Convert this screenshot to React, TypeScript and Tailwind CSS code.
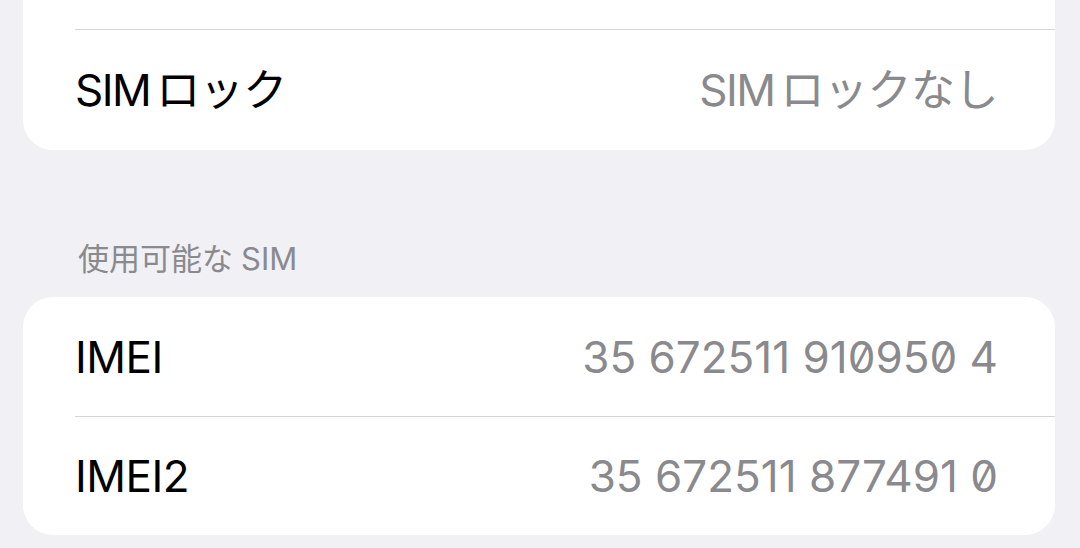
import React from "react";

type Row = { label: string; latin?: string; value: string; valueLatin?: string; mono?: boolean; h: string };

const font = "font-['Inter','Noto_Sans_CJK_JP',sans-serif]";

// iOS puts a little air between latin and kana, so split them
const Mixed = ({ latin, rest }: { latin?: string; rest: string }) => (
  <>
    {latin && <span className="mr-[6px] tracking-[-1.5px]">{latin}</span>}
    {rest}
  </>
);

const SettingRow = ({ row, divider }: { row: Row; divider?: boolean }) => (
  <div className="pl-[52px]">
    <div
      className={`flex items-center justify-between pr-[57px] ${row.h} ${
        divider ? "border-b border-[#d6d6da]" : ""
      }`}
    >
      <span className="text-[44px] text-black tracking-[-0.5px]">
        <Mixed latin={row.latin} rest={row.label} />
      </span>
      <span
        className={`text-[44px] text-[#8a8a8e] ${
          row.mono ? "slashed-zero tracking-[0px]" : "tracking-[-0.5px]"
        }`}
      >
        <Mixed latin={row.valueLatin} rest={row.value} />
      </span>
    </div>
  </div>
);

const App = () => {
  // first group is scrolled mostly off screen, only its last row shows
  const lockRows: Row[] = [
    { label: "", value: "", h: "h-[120px]" },
    { latin: "SIM", label: "ロック", valueLatin: "SIM", value: "ロックなし", h: "h-[120px]" },
  ];
  const simRows: Row[] = [
    { label: "IMEI", value: "35 672511 910950 4", mono: true, h: "h-[120px]" },
    { label: "IMEI2", value: "35 672511 877491 0", mono: true, h: "h-[118px]" },
  ];

  return (
    <div className={`w-[1080px] h-[548px] overflow-hidden bg-[#f0f0f5] pl-[23px] pr-[25px] ${font}`}>
      <div className="bg-white rounded-[30px] -mt-[90px] overflow-hidden">
        {lockRows.map((r, i) => (
          <SettingRow key={i} row={r} divider={i < lockRows.length - 1} />
        ))}
      </div>

      <div className="h-[147px] flex items-end pb-[20px] pl-[55px]">
        <span className="text-[31px] leading-[36px] text-[#8a8a8e]">
          使用可能な<span className="ml-[8px]">SIM</span>
        </span>
      </div>

      <div className="bg-white rounded-[30px] overflow-hidden">
        {simRows.map((r, i) => (
          <SettingRow key={i} row={r} divider={i < simRows.length - 1} />
        ))}
      </div>
    </div>
  );
};

export default App;
